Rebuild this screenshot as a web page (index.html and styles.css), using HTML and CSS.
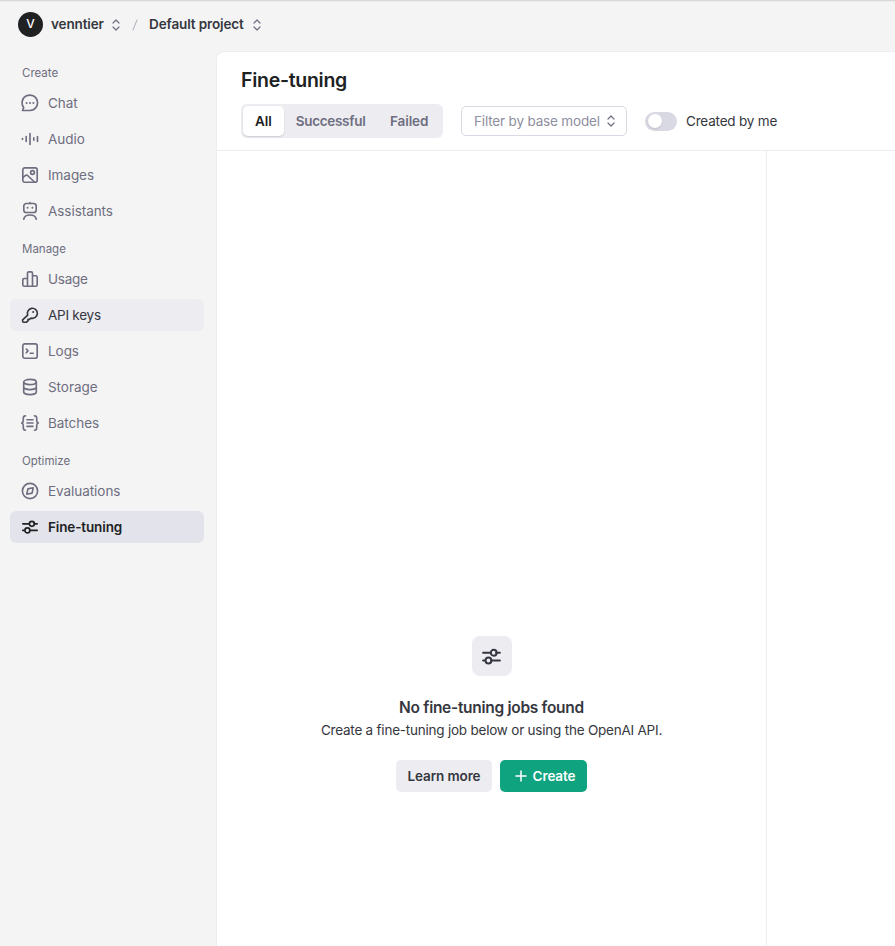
FILE: index.html
```html
<!DOCTYPE html>
<html lang="en">
<head>
<meta charset="utf-8">
<title>Fine-tuning</title>
<link rel="stylesheet" href="styles.css">
</head>
<body>
<svg class="sprite" aria-hidden="true">
  <symbol id="updown" viewBox="0 0 8 12"><path d="M1 4l3-3 3 3M1 8l3 3 3-3"/></symbol>
  <symbol id="tune" viewBox="0 0 18 18"><path d="M1.8 5.8h5.8M13 5.800h3.200M1.800 12.400h1.500M8.700 12.400h7.500"/><circle cx="10.900" cy="5.800" r="2.500"/><circle cx="6.400" cy="12.400" r="2.500"/></symbol>
</svg>
<header class="topbar">
  <span class="avatar">V</span>
  <span class="crumb org">venntier</span>
  <svg class="updown"><use href="#updown"/></svg>
  <svg class="slash" viewBox="0 0 6 12"><path d="M1 11L5 1"/></svg>
  <span class="crumb project">Default project</span>
  <svg class="updown"><use href="#updown"/></svg>
</header>
<div class="shell">
  <nav class="sidebar">
    <h2 class="group">Create</h2>
    <a class="item"><svg viewBox="0 0 18 18"><path d="M1.500 16.500l1.200-3A7.700 7.700 0 1 1 9 16.500z"/><path class="dots" d="M5.600 9h.01M9 9h.01M12.400 9h.01"/></svg><span>Chat</span></a>
    <a class="item"><svg viewBox="0 0 18 18"><path d="M1.500 8.500v1M5.200 6.500v5M9 3.500v11M12.800 7.800v2.400M16.500 6.500v5"/></svg><span>Audio</span></a>
    <a class="item"><svg viewBox="0 0 18 18"><rect x="1.800" y="1.800" width="14.400" height="14.400" rx="2"/><circle cx="11.500" cy="6.500" r="1.900"/><path d="M2 11.300l2.600-1.900c.7-.5 1.400-.4 2 .1l6.800 6.500"/></svg><span>Images</span></a>
    <a class="item"><svg viewBox="0 0 18 18"><rect x="2.800" y="1.500" width="12.400" height="9" rx="2.600"/><path d="M9 .5v1M2.800 17.200c.4-2.700 2.900-4.200 6.200-4.200s5.800 1.500 6.200 4.200"/><path class="dots" d="M6.600 5.800h.01M11.400 5.800h.01"/></svg><span>Assistants</span></a>
    <h2 class="group">Manage</h2>
    <a class="item"><svg viewBox="0 0 18 18"><path d="M6.500 16.200V3.200c0-.8.600-1.400 1.400-1.400h2.200c.8 0 1.400.6 1.400 1.400v13M6.500 8.500H3.300c-.8 0-1.500.7-1.500 1.500v4.700c0 .8.700 1.500 1.500 1.500h11.400c.8 0 1.500-.7 1.500-1.500V7.200c0-.8-.7-1.500-1.500-1.500h-3.200"/></svg><span class="tight">Usage</span></a>
    <a class="item hover"><svg viewBox="0 0 18 18"><path d="M6.700 9.100a5 5 0 1 1 3.300 3l-1.500 1.300H7v1.400l-1.500 1.400H2.600c-.6 0-1-.4-1-1v-1.400z"/><path class="dots" d="M12.200 6h.01"/></svg><span class="tight">API keys</span></a>
    <a class="item"><svg viewBox="0 0 18 18"><rect x="1.800" y="1.800" width="14.400" height="14.400" rx="2"/><path d="M5.300 7l1.700 1.900-1.700 1.900M9.200 11.200h3"/></svg><span>Logs</span></a>
    <a class="item"><svg viewBox="0 0 18 18"><ellipse cx="9" cy="4" rx="6.300" ry="2.600"/><path d="M2.700 4v10c0 1.400 2.800 2.600 6.300 2.600s6.300-1.200 6.300-2.600V4M2.700 9c0 1.400 2.800 2.600 6.300 2.600S15.300 10.400 15.300 9"/></svg><span>Storage</span></a>
    <a class="item"><svg viewBox="0 0 18 18"><path d="M4.500 1.800C2.700 1.800 2.300 2.700 2.300 4v2.600c0 1.300-.3 2-1.600 2.400 1.300.4 1.600 1.100 1.600 2.400V14c0 1.300.4 2.200 2.200 2.200M13.500 1.800c1.800 0 2.200.9 2.200 2.200v2.600c0 1.300.3 2 1.600 2.400-1.300.4-1.600 1.100-1.600 2.400V14c0 1.300-.4 2.200-2.200 2.200M6 5.700h6M6 9h6M6 12.300h6"/></svg><span>Batches</span></a>
    <h2 class="group">Optimize</h2>
    <a class="item"><svg viewBox="0 0 18 18"><circle cx="9" cy="9" r="7.600"/><path d="M6.900 6.900l5.300-1.100-1.100 5.300-5.300 1.100z"/></svg><span>Evaluations</span></a>
    <a class="item active"><svg><use href="#tune"/></svg><span>Fine-tuning</span></a>
  </nav>
  <main class="panel">
    <div class="panel-head">
      <h1>Fine-tuning</h1>
      <div class="filters">
        <div class="tabs">
          <button class="tab selected">All</button>
          <button class="tab t-success">Successful</button>
          <button class="tab t-failed">Failed</button>
        </div>
        <div class="select"><span>Filter by base model</span><svg class="updown"><use href="#updown"/></svg></div>
        <span class="switch"></span>
        <span class="switch-label">Created by me</span>
      </div>
    </div>
    <div class="content">
      <section class="list">
        <div class="empty-icon"><svg><use href="#tune"/></svg></div>
        <h3>No fine-tuning jobs found</h3>
        <p>Create a fine-tuning job below or using the OpenAI API.</p>
        <div class="actions">
          <button class="btn learn">Learn more</button>
          <button class="btn primary"><svg viewBox="0 0 12 12"><path d="M6 1v10M1 6h10"/></svg><span>Create</span></button>
        </div>
      </section>
      <section class="detail"></section>
    </div>
  </main>
</div>
</body>
</html>
```
FILE: styles.css
```css
* { box-sizing: border-box; }
body {
  margin: 0;
  height: 946px;
  overflow: hidden;
  display: flex;
  flex-direction: column;
  background: #f4f4f4;
  color: #353740;
  font: 400 13.5px/20px Inter, "Liberation Sans", sans-serif;
}
h1, h2, h3, p { margin: 0; }
button { font: inherit; border: 0; margin: 0; white-space: nowrap; }
svg { fill: none; stroke: currentColor; stroke-width: 1.5; stroke-linecap: round; stroke-linejoin: round; flex: none; }
.sprite { position: absolute; width: 0; height: 0; }
.dots { stroke-width: 2; }

.topbar {
  height: 51px;
  flex: none;
  display: flex;
  align-items: center;
  padding: 0 18px 3px;
  border-top: 1px solid #d9d9d9;
  box-shadow: inset 0 1px 0 #ebebeb;
  white-space: nowrap;
}
.avatar {
  width: 25px;
  height: 25px;
  padding-bottom: 1px;
  border-radius: 50%;
  background: #202123;
  color: #fff;
  font-size: 12px;
  font-weight: 500;
  display: grid;
  place-items: center;
}
.crumb { font-weight: 600; letter-spacing: -0.12px; padding-bottom: 2px; }
.org { width: 53px; margin-left: 8px; }
.project { width: 95px; margin-left: 11px; }
.updown { width: 8px; height: 12px; color: #6e6e80; stroke-width: 1.2; }
.org + .updown, .project + .updown { margin-left: 8px; }
.project + .updown { margin-left: 9px; }
.slash { width: 6px; height: 12px; margin-left: 12px; color: #acacbe; stroke-width: 1; }

.shell { flex: 1; display: flex; min-height: 0; }
.sidebar { width: 216px; flex: none; padding: 8px 12px 0 10px; display: flex; flex-direction: column; }
.group { font-size: 11.5px; font-weight: 400; line-height: 28px; height: 28px; padding-left: 12px; color: #6e6e80; }
.item + .group { margin-top: 8px; }
.item {
  height: 32px;
  flex: none;
  display: flex;
  align-items: center;
  gap: 9px;
  padding-left: 11px;
  border-radius: 6px;
  color: #6e6e80;
  letter-spacing: -0.05px;
}
.item + .item { margin-top: 4px; }
.item svg { width: 18px; height: 18px; stroke-width: 1.65; }
.item .dots { stroke-width: 2; }
.tight { letter-spacing: -0.25px; }
.hover { background: #ececf1; color: #353740; }
.active { background: #e3e4eb; color: #202123; font-weight: 600; letter-spacing: -0.13px; }

.panel {
  flex: 1;
  display: flex;
  flex-direction: column;
  background: #fff;
  border: 1px solid #ececf1;
  border-width: 1px 0 0 1px;
  border-top-left-radius: 8px;
}
.panel-head { height: 99px; flex: none; padding: 14px 24px 0; border-bottom: 1px solid #ececf1; }
h1 { font-size: 19.5px; line-height: 28px; font-weight: 600; letter-spacing: -0.28px; color: #202123; }
.filters { display: flex; align-items: center; margin-top: 10px; white-space: nowrap; }
.tabs { width: 202px; height: 34px; display: flex; padding: 2px; background: #ececf1; border-radius: 6px; }
.tab { padding: 0; background: none; border-radius: 5px; color: #6e6e80; font-weight: 600; }
.selected { width: 41px; background: #fff; color: #202123; box-shadow: 0 1px 2px #0002; }
.t-success { width: 94px; letter-spacing: -0.3px; }
.t-failed { width: 64px; letter-spacing: -0.1px; }
.select {
  width: 166px;
  height: 30px;
  margin-left: 18px;
  padding: 0 11px 0 12px;
  display: flex;
  align-items: center;
  justify-content: space-between;
  border: 1px solid #d9d9e3;
  border-radius: 5px;
  color: #8e8ea0;
  letter-spacing: -0.17px;
}
.switch { width: 32px; height: 19px; margin-left: 18px; padding: 2px 3px; border-radius: 10px; background: #d9d9e3; }
.switch::before { content: ""; display: block; width: 14px; height: 14px; border-radius: 50%; background: #fff; box-shadow: 0 1px 2px #0002; }
.switch-label { margin-left: 9px; letter-spacing: -0.19px; }

.content { flex: 1; display: flex; }
.list { width: 550px; padding-top: 485px; border-right: 1px solid #ececf1; display: flex; flex-direction: column; align-items: center; white-space: nowrap; }
.empty-icon { width: 40px; height: 40px; display: grid; place-items: center; background: #ececf1; border-radius: 8px; }
.empty-icon svg { width: 21px; height: 21px; stroke-width: 1.7; }
h3 { margin-top: 20px; font-size: 15.5px; line-height: 24px; font-weight: 600; letter-spacing: -0.29px; }
p { line-height: 20px; letter-spacing: -0.22px; }
.actions { display: flex; gap: 8px; margin-top: 20px; }
.btn { height: 32px; border-radius: 5px; padding: 0 0 1px; background: #ececf1; color: #353740; font-weight: 600; letter-spacing: -0.12px; display: flex; align-items: center; justify-content: center; }
.learn { width: 96px; }
.primary { width: 87px; gap: 6px; padding-left: 3px; background: #10a37f; color: #fff; }
.btn svg { width: 12px; height: 12px; margin-top: 1px; }
```
